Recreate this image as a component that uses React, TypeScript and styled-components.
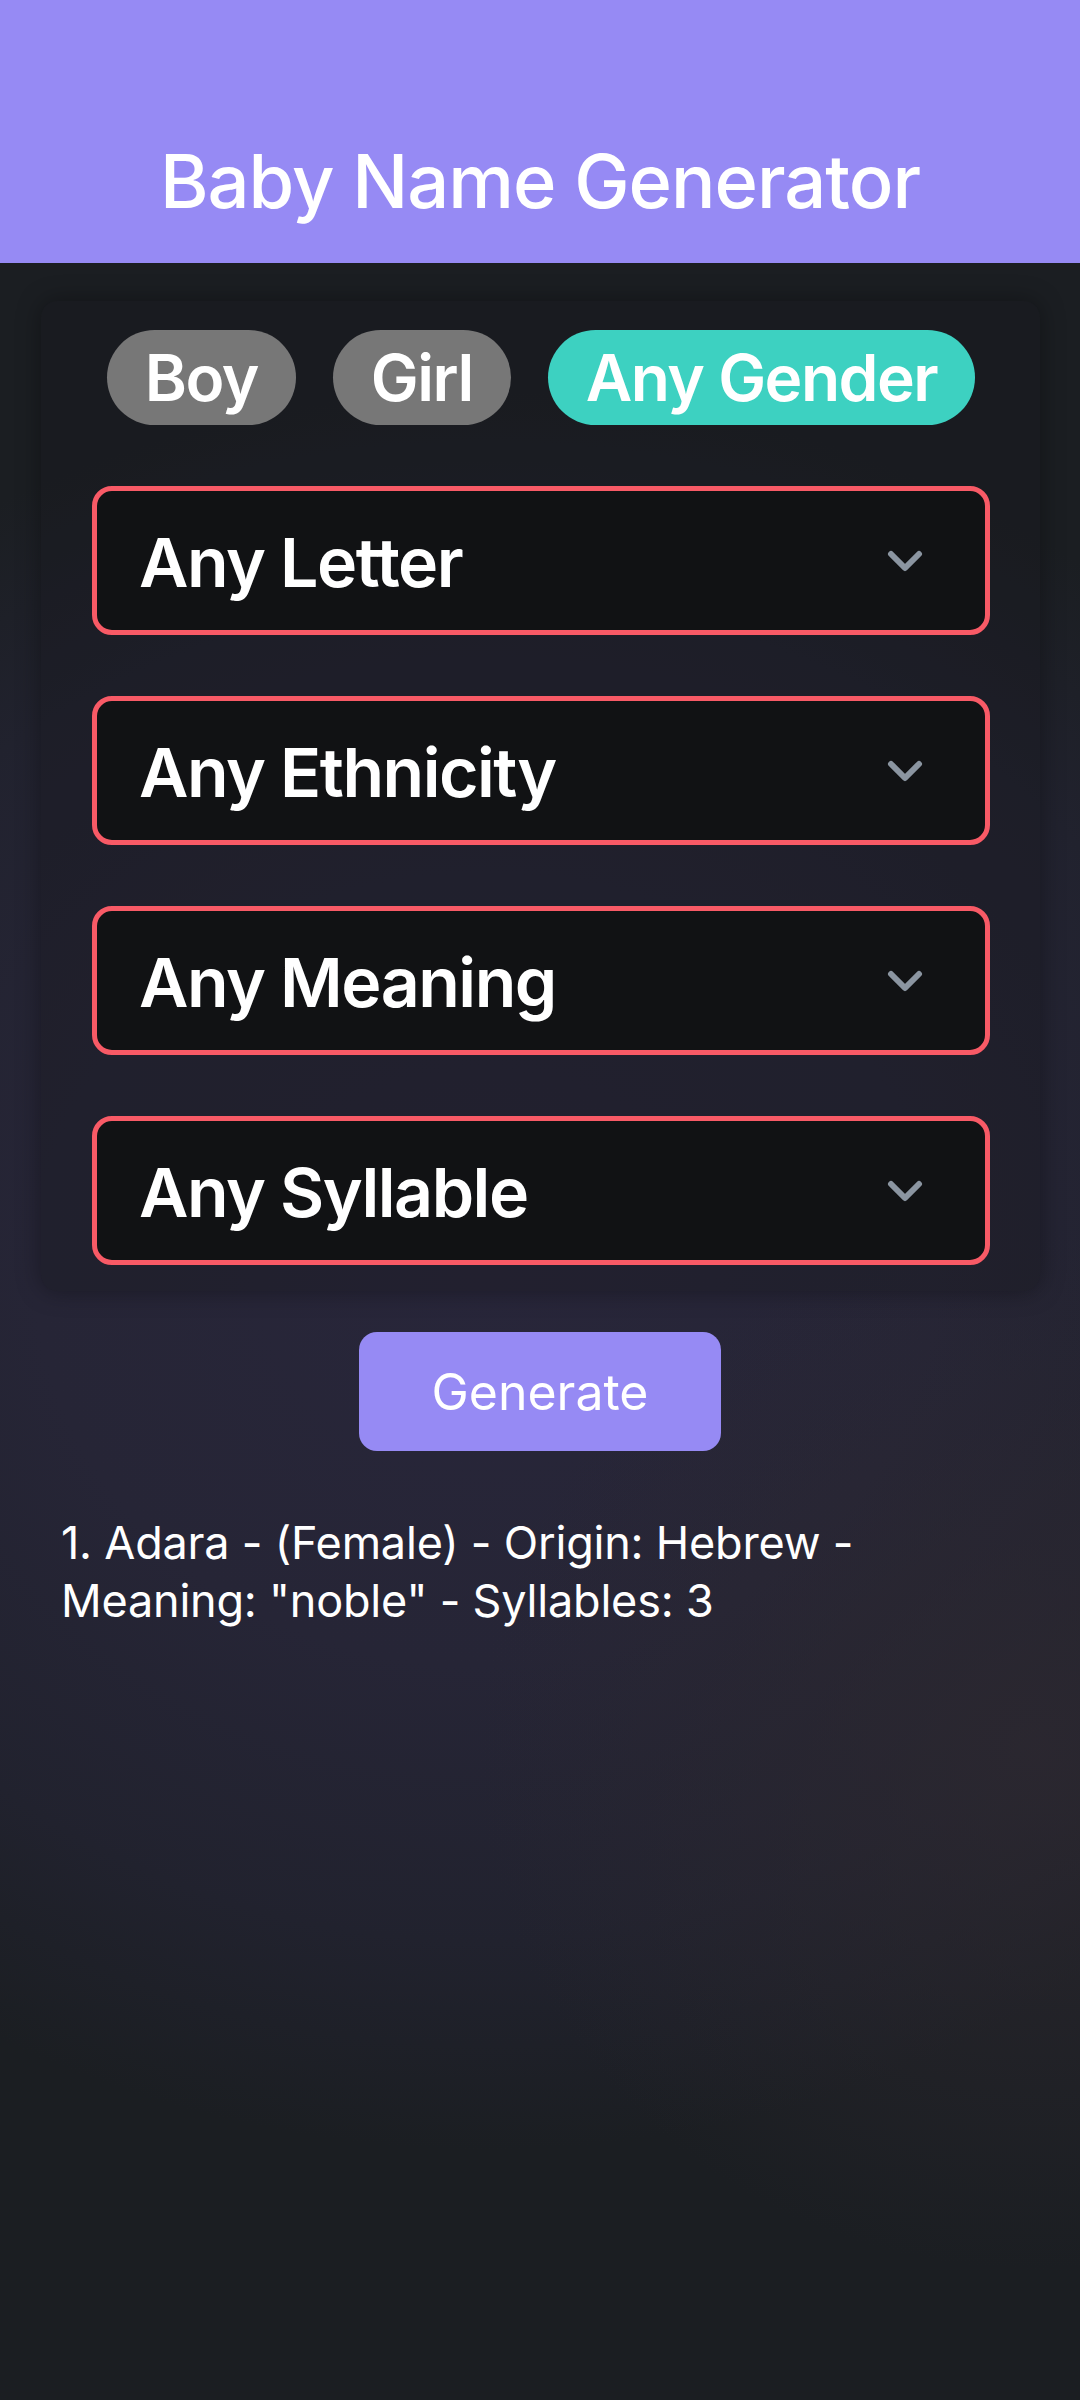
import React, { useState } from "react";
import styled, { createGlobalStyle } from "styled-components";

const GlobalStyle = createGlobalStyle`
  html, body {
    margin: 0;
    padding: 0;
    background: #1b1e22;
  }
  * { box-sizing: border-box; }
`;

const Page = styled.div`
  width: 1080px;
  min-height: 2400px;
  display: flex;
  flex-direction: column;
  font-family: Inter, "Noto Sans", sans-serif;
  color: #ffffff;
  background:
    radial-gradient(ellipse 560px 520px at 96% 1750px, rgba(44, 40, 48, 0.85) 0%, rgba(44, 40, 48, 0) 100%),
    radial-gradient(ellipse 1000px 880px at 45% 1270px, #28263a 0%, #262536 45%, rgba(36, 36, 52, 0.7) 75%, rgba(27, 30, 34, 0) 100%),
    #1b1e22;
`;

const Header = styled.header`
  height: 263px;
  background: #968af4;
  display: flex;
  align-items: flex-end;
  justify-content: center;
  padding-bottom: 37px;
`;

const Title = styled.h1`
  margin: 0;
  font-size: 74px;
  font-weight: 500;
  letter-spacing: -1px;
  line-height: 1.2;
  color: #ffffff;
`;

const Card = styled.section`
  margin: 38px 40px 0 41px;
  padding: 29px 50px 26px 51px;
  background: rgba(22, 23, 30, 0.35);
  border-radius: 16px;
  box-shadow: 0 0 24px rgba(0, 0, 0, 0.35);
  display: flex;
  flex-direction: column;
  gap: 61px;
`;

const PillRow = styled.div`
  display: flex;
  justify-content: center;
  gap: 37px;
`;

const Pill = styled.button<{ $active?: boolean }>`
  height: 95px;
  padding: 0 38px;
  border: none;
  border-radius: 48px;
  background: ${(p) => (p.$active ? "#3dd1c1" : "#777777")};
  color: #ffffff;
  font-family: Inter, "Noto Sans", sans-serif;
  font-size: 64px;
  font-weight: 600;
  letter-spacing: -1.5px;
  display: flex;
  align-items: center;
`;

const Select = styled.div`
  height: 149px;
  border: 5px solid #f85a66;
  border-radius: 20px;
  background: #111214;
  display: flex;
  align-items: center;
  justify-content: space-between;
  padding: 0 62px 0 42px;
`;

const SelectLabel = styled.span`
  font-size: 68px;
  font-weight: 600;
  letter-spacing: -1.5px;
  color: #ffffff;
  margin-top: 2px;
`;

const Chevron = styled.svg`
  width: 36px;
  height: 22px;
  flex: none;
`;

const GenerateButton = styled.button`
  align-self: center;
  margin-top: 41px;
  width: 362px;
  height: 119px;
  border: none;
  border-radius: 18px;
  background: #968af4;
  color: #ffffff;
  font-family: Inter, "Noto Sans", sans-serif;
  font-size: 50px;
  font-weight: 400;
  letter-spacing: 0;
`;

const Result = styled.p`
  margin: 63px 61px 0 61px;
  font-size: 45px;
  line-height: 58px;
  font-weight: 400;
  letter-spacing: -0.2px;
  color: #ffffff;
`;

const filters = ["Any Letter", "Any Ethnicity", "Any Meaning", "Any Syllable"];

export default function App() {
  const [gender, setGender] = useState("Any Gender");
  return (
    <>
      <GlobalStyle />
      <Page>
        <Header>
          <Title>Baby Name Generator</Title>
        </Header>
        <Card>
          <PillRow>
            {["Boy", "Girl", "Any Gender"].map((g) => (
              <Pill key={g} $active={gender === g} onClick={() => setGender(g)}>
                {g}
              </Pill>
            ))}
          </PillRow>
          {filters.map((f) => (
            <Select key={f}>
              <SelectLabel>{f}</SelectLabel>
              <Chevron viewBox="0 0 36 22">
                <path
                  d="M4 4 L18 18 L32 4"
                  fill="none"
                  stroke="#8b95a1"
                  strokeWidth="6"
                  strokeLinecap="round"
                  strokeLinejoin="round"
                />
              </Chevron>
            </Select>
          ))}
        </Card>
        <GenerateButton>Generate</GenerateButton>
        <Result>
          1. Adara - (Female) - Origin: Hebrew - Meaning: "noble" - Syllables: 3
        </Result>
      </Page>
    </>
  );
}
